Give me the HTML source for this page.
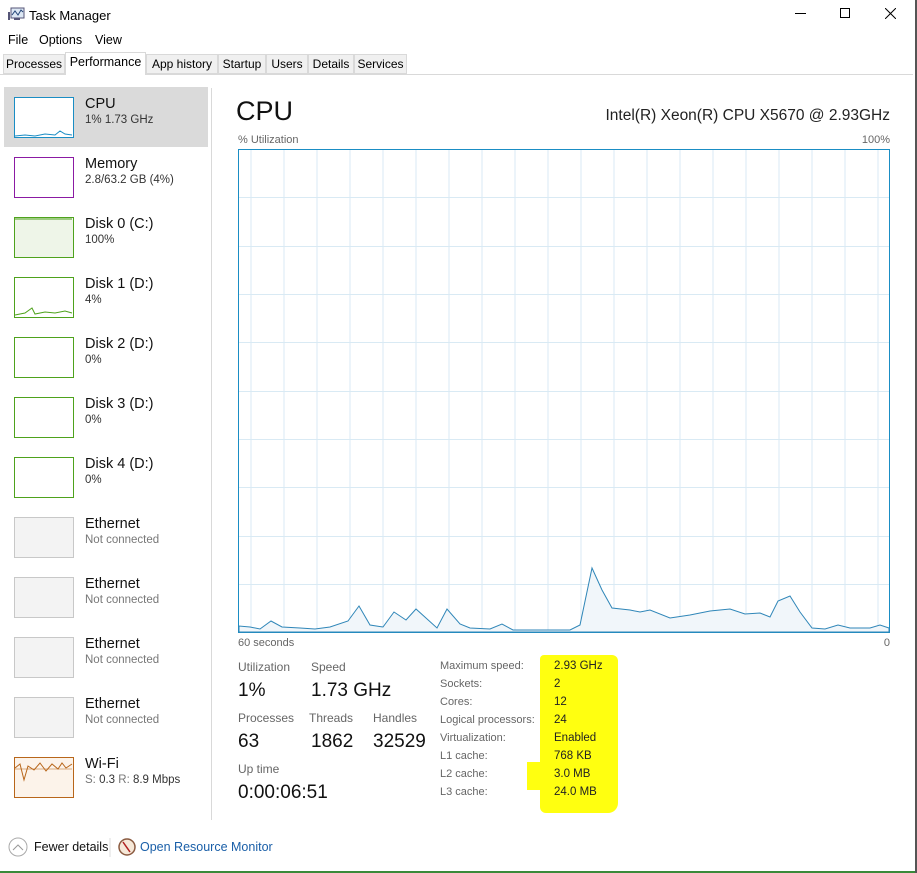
<!DOCTYPE html>
<html><head><meta charset="utf-8"><style>
*{margin:0;padding:0;box-sizing:border-box}
body{width:917px;height:873px;background:#fff;font-family:"Liberation Sans",sans-serif;color:#000;position:relative;overflow:hidden}
.a{position:absolute;white-space:nowrap}
.tab{position:absolute;top:54px;height:20px;background:#f0f0f0;border:1px solid #d9d9d9;font-size:12px;line-height:18px;text-align:center}
.th{position:absolute;left:14px;width:60px;height:41px;border:1px solid}
.nm{position:absolute;left:85px;font-size:14.5px;color:#111}
.sb{position:absolute;left:85px;font-size:11.5px;color:#333}
.lbl{font-size:12px;color:#666;position:absolute}
.big{font-size:19px;color:#111;position:absolute}
.k{position:absolute;left:440px;font-size:11px;color:#666}
.v{position:absolute;left:554px;font-size:11.5px;color:#222}
</style></head><body>
<svg class="a" style="left:8px;top:6px" width="18" height="16" viewBox="0 0 18 16"><rect x="3" y="2" width="13" height="10" fill="#dde8f4" stroke="#557" stroke-width="1"/><polyline points="4,9 7,5 10,9 13,4 15,6" fill="none" stroke="#247" stroke-width="1"/><rect x="0" y="6" width="2" height="8" fill="#557"/><rect x="6" y="12" width="6" height="2" fill="#557"/></svg>
<div class="a" style="left:29px;top:8px;font-size:13px">Task Manager</div>
<div class="a" style="left:795px;top:13px;width:11px;height:1px;background:#000"></div>
<div class="a" style="left:840px;top:8px;width:10px;height:10px;border:1px solid #000"></div>
<svg class="a" style="left:885px;top:8px" width="11" height="11"><path d="M0 0L11 11M11 0L0 11" stroke="#000" stroke-width="1"/></svg>
<div class="a" style="left:8px;top:33px;font-size:12.5px">File</div>
<div class="a" style="left:39px;top:33px;font-size:12.5px">Options</div>
<div class="a" style="left:95px;top:33px;font-size:12.5px">View</div>
<div class="a" style="left:0;top:74px;width:913px;height:1px;background:#d9d9d9"></div>
<div class="tab" style="left:3px;width:62px">Processes</div>
<div class="tab" style="left:65px;width:81px;top:52px;height:23px;background:#fff;border-bottom:none;font-size:12.5px">Performance</div>
<div class="tab" style="left:146px;width:72px">App history</div>
<div class="tab" style="left:218px;width:48px">Startup</div>
<div class="tab" style="left:266px;width:42px">Users</div>
<div class="tab" style="left:308px;width:46px">Details</div>
<div class="tab" style="left:354px;width:53px">Services</div>

<div class="a" style="left:4px;top:87px;width:204px;height:60px;background:#dadada"></div>
<div class="a" style="left:211px;top:88px;width:1px;height:732px;background:#d9d9d9"></div>

<div class="th" style="top:97px;border-color:#1a8dc4;background:#fff"></div>
<div class="nm" style="top:96px">CPU</div><div class="sb" style="top:114px">1% 1.73 GHz</div>
<div class="th" style="top:157px;border-color:#8b1aa3"></div>
<div class="nm" style="top:156px">Memory</div><div class="sb" style="top:174px">2.8/63.2 GB (4%)</div>
<div class="th" style="top:217px;border-color:#4ea21c;background:#eef5e8"></div>
<div class="nm" style="top:216px">Disk 0 (C:)</div><div class="sb" style="top:234px">100%</div>
<div class="th" style="top:277px;border-color:#4ea21c"></div>
<div class="nm" style="top:276px">Disk 1 (D:)</div><div class="sb" style="top:294px">4%</div>
<div class="th" style="top:337px;border-color:#4ea21c"></div>
<div class="nm" style="top:336px">Disk 2 (D:)</div><div class="sb" style="top:354px">0%</div>
<div class="th" style="top:397px;border-color:#4ea21c"></div>
<div class="nm" style="top:396px">Disk 3 (D:)</div><div class="sb" style="top:414px">0%</div>
<div class="th" style="top:457px;border-color:#4ea21c"></div>
<div class="nm" style="top:456px">Disk 4 (D:)</div><div class="sb" style="top:474px">0%</div>
<div class="th" style="top:517px;border-color:#c8c8c8;background:#f3f3f3"></div>
<div class="nm" style="top:516px">Ethernet</div><div class="sb" style="top:534px;color:#777">Not connected</div>
<div class="th" style="top:577px;border-color:#c8c8c8;background:#f3f3f3"></div>
<div class="nm" style="top:576px">Ethernet</div><div class="sb" style="top:594px;color:#777">Not connected</div>
<div class="th" style="top:637px;border-color:#c8c8c8;background:#f3f3f3"></div>
<div class="nm" style="top:636px">Ethernet</div><div class="sb" style="top:654px;color:#777">Not connected</div>
<div class="th" style="top:697px;border-color:#c8c8c8;background:#f3f3f3"></div>
<div class="nm" style="top:696px">Ethernet</div><div class="sb" style="top:714px;color:#777">Not connected</div>
<div class="th" style="top:757px;border-color:#b8661a;background:#fcf3ea"></div>
<div class="nm" style="top:756px">Wi-Fi</div><div class="sb" style="top:774px"><span style="color:#777">S:</span> 0.3 <span style="color:#777">R:</span> 8.9 Mbps</div>

<svg class="a" style="left:0;top:0" width="917" height="873">
<g stroke="#1a8dc4" fill="none" stroke-width="1"><polyline points="15,136 25,135 35,136 45,134 55,135 60,131 65,134 72,135"/></g>
<g stroke="#4ea21c" fill="none"><polyline points="15,315 25,313 32,308 35,314 45,312 55,313 65,311 72,313"/><line x1="15" y1="219" x2="72" y2="219"/></g>
<polyline points="15,768 20,764 24,780 28,766 34,770 40,763 46,771 52,764 58,769 62,763 66,768 72,764" stroke="#b8661a" fill="none"/>
<line x1="15" y1="769" x2="72" y2="769" stroke="#b8661a" stroke-width=".6"/>
<rect x="238.5" y="149.5" width="651" height="483" fill="#fff" stroke="#1a8dc4"/>
<g stroke="#d9eaf4" stroke-width="1">
<line x1="251" y1="150" x2="251" y2="632"/><line x1="284" y1="150" x2="284" y2="632"/><line x1="317" y1="150" x2="317" y2="632"/><line x1="350" y1="150" x2="350" y2="632"/><line x1="383" y1="150" x2="383" y2="632"/><line x1="416" y1="150" x2="416" y2="632"/><line x1="449" y1="150" x2="449" y2="632"/><line x1="482" y1="150" x2="482" y2="632"/><line x1="515" y1="150" x2="515" y2="632"/><line x1="548" y1="150" x2="548" y2="632"/><line x1="581" y1="150" x2="581" y2="632"/><line x1="614" y1="150" x2="614" y2="632"/><line x1="647" y1="150" x2="647" y2="632"/><line x1="680" y1="150" x2="680" y2="632"/><line x1="713" y1="150" x2="713" y2="632"/><line x1="746" y1="150" x2="746" y2="632"/><line x1="779" y1="150" x2="779" y2="632"/><line x1="812" y1="150" x2="812" y2="632"/><line x1="845" y1="150" x2="845" y2="632"/><line x1="878" y1="150" x2="878" y2="632"/>
<line x1="239" y1="197.5" x2="889" y2="197.5"/><line x1="239" y1="246.5" x2="889" y2="246.5"/><line x1="239" y1="294.5" x2="889" y2="294.5"/><line x1="239" y1="342.5" x2="889" y2="342.5"/><line x1="239" y1="391.5" x2="889" y2="391.5"/><line x1="239" y1="439.5" x2="889" y2="439.5"/><line x1="239" y1="487.5" x2="889" y2="487.5"/><line x1="239" y1="536.5" x2="889" y2="536.5"/><line x1="239" y1="584.5" x2="889" y2="584.5"/>
</g>
<polygon fill="#f1f6fa" stroke="#2f86b8" stroke-width="1" points="239,632 239,626 250,627 260,629 271,621 282,627 300,628 315,629 330,627 348,621 359,606 370,625 383,627 394,612 406,620 416,609 437,628 447,609 460,624 470,628 490,629 502,624 513,630 570,630 580,625 592,568 602,590 612,608 630,610 640,612 650,610 670,618 690,615 710,611 730,609 745,614 760,613 770,617 778,601 790,596 800,612 812,628 825,629 838,625 850,628 870,628 880,625 889,628 889,632"/>
<circle cx="18" cy="847" r="9" fill="#fff" stroke="#aaa"/><polyline points="13,850 18,845 23,850" fill="none" stroke="#999"/>
<line x1="110" y1="838" x2="110" y2="857" stroke="#ddd"/>
<circle cx="127" cy="847" r="8" fill="#f6e8d8" stroke="#8a5a40" stroke-width="1.5"/><line x1="123" y1="842" x2="130" y2="852" stroke="#b02020" stroke-width="1.5"/>
</svg>

<div class="a" style="left:236px;top:96px;font-size:27px;color:#111">CPU</div>
<div class="a" style="right:27px;top:107px;font-size:15.5px;color:#222">Intel(R) Xeon(R) CPU X5670 @ 2.93GHz</div>
<div class="a" style="left:238px;top:134px;font-size:11px;color:#666">% Utilization</div>
<div class="a" style="right:27px;top:134px;font-size:11px;color:#666">100%</div>
<div class="a" style="left:238px;top:637px;font-size:11px;color:#666">60 seconds</div>
<div class="a" style="right:27px;top:637px;font-size:11px;color:#666">0</div>

<div class="lbl" style="left:238px;top:660px">Utilization</div>
<div class="lbl" style="left:311px;top:660px">Speed</div>
<div class="big" style="left:238px;top:680px">1%</div>
<div class="big" style="left:311px;top:680px">1.73 GHz</div>
<div class="lbl" style="left:238px;top:711px">Processes</div>
<div class="lbl" style="left:309px;top:711px">Threads</div>
<div class="lbl" style="left:373px;top:711px">Handles</div>
<div class="big" style="left:238px;top:731px">63</div>
<div class="big" style="left:311px;top:731px">1862</div>
<div class="big" style="left:373px;top:731px">32529</div>
<div class="lbl" style="left:238px;top:762px">Up time</div>
<div class="big" style="left:238px;top:782px">0:00:06:51</div>

<div class="a" style="left:540px;top:655px;width:78px;height:158px;background:#ffff10;border-radius:4px 6px 10px 6px"></div>
<div class="a" style="left:527px;top:762px;width:20px;height:28px;background:#ffff10"></div>
<div class="k" style="top:660px">Maximum speed:</div><div class="v" style="top:660px">2.93 GHz</div>
<div class="k" style="top:678px">Sockets:</div><div class="v" style="top:678px">2</div>
<div class="k" style="top:696px">Cores:</div><div class="v" style="top:696px">12</div>
<div class="k" style="top:714px">Logical processors:</div><div class="v" style="top:714px">24</div>
<div class="k" style="top:732px">Virtualization:</div><div class="v" style="top:732px">Enabled</div>
<div class="k" style="top:750px">L1 cache:</div><div class="v" style="top:750px">768 KB</div>
<div class="k" style="top:768px">L2 cache:</div><div class="v" style="top:768px">3.0 MB</div>
<div class="k" style="top:786px">L3 cache:</div><div class="v" style="top:786px">24.0 MB</div>

<div class="a" style="left:34px;top:840px;font-size:12.5px;color:#111">Fewer details</div>
<div class="a" style="left:140px;top:840px;font-size:12.5px;color:#1a5fa8">Open Resource Monitor</div>
<div class="a" style="left:0;top:871px;width:917px;height:2px;background:#3a8a3a"></div>
<div class="a" style="left:915px;top:0;width:2px;height:873px;background:#555"></div>
</body></html>
